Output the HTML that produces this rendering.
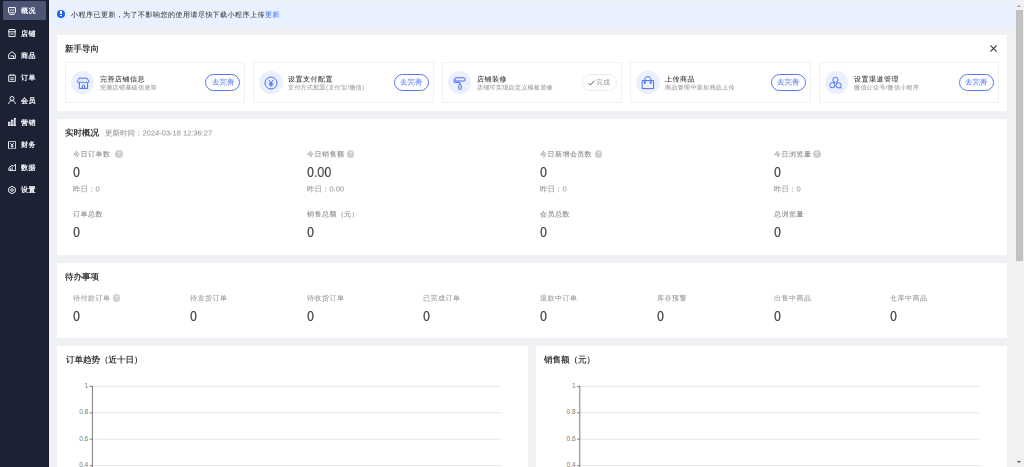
<!DOCTYPE html>
<html><head><meta charset="utf-8">
<style>
*{margin:0;padding:0;box-sizing:border-box}
html,body{width:1024px;height:467px;overflow:hidden}
body{font-family:"Liberation Sans",sans-serif;background:#f0f1f4;position:relative;color:#333}
.abs{position:absolute}
.tx{position:absolute;white-space:nowrap;transform-origin:0 0;z-index:3;will-change:transform}
.side{position:absolute;left:0;top:0;width:49px;height:467px;background:#1c2134}
.side:after{content:"";position:absolute;right:0;top:0;width:1.5px;height:467px;background:#161a29}
.act{position:absolute;left:3px;top:1.1px;width:43.3px;height:18.9px;background:#4d5577;border-radius:1px}
.sico{position:absolute;width:8px;height:8px}
.topstrip{position:absolute;left:49px;top:0;width:966px;height:1.3px;background:#f1f2f4}
.banner{position:absolute;left:49px;top:1.3px;width:966px;height:26.2px;background:#eaf1fe}
.dot{position:absolute;left:56.9px;top:9.6px;width:8.4px;height:8.4px;border-radius:50%;background:#2160f5}
.dot:before{content:"";position:absolute;left:3.6px;top:1.6px;width:1.2px;height:3.2px;background:#fff}
.dot:after{content:"";position:absolute;left:3.6px;top:5.6px;width:1.2px;height:1.2px;background:#fff}
.card{position:absolute;background:#fff}
.gi{position:absolute;width:180.44px;height:40.3px;border:1px solid #f0f1f5;background:#fff}
.circ{position:absolute;width:23.4px;height:23.4px;border-radius:50%;background:#eaf0fd}
.circ svg{position:absolute;left:4.7px;top:5.2px;width:14px;height:14px}
.btn{position:absolute;width:35px;height:16.8px;border:1px solid #5878f0;border-radius:9px}
.btn.done{border-color:#ececec}
.q{position:absolute;width:7.6px;height:7.6px;border-radius:50%;background:#cfcfcf;z-index:3}
.q svg{position:absolute;left:0;top:0}
.sb{position:absolute;left:1015px;top:0;width:9px;height:467px;background:#f1f1f1}
.sb .th{position:absolute;left:1px;top:10px;width:7px;height:250.7px;background:#c1c1c1}
.sb .up{position:absolute;left:2.3px;top:4.8px;width:0;height:0;border-left:2px solid transparent;border-right:2px solid transparent;border-bottom:2.2px solid #a3a3a3}
.sb .dn{position:absolute;left:2.3px;top:460.8px;width:0;height:0;border-left:2px solid transparent;border-right:2px solid transparent;border-top:2.2px solid #505050}
.chart{position:absolute;z-index:2}
</style></head><body>
<div class="side"><div class="act"></div></div>
<svg class="sico" style="left:8.2px;top:6.6px;z-index:3" viewBox="0 0 8 8" fill="none" stroke="#f2f3f6" stroke-width="1"><rect x="0.5" y="0.5" width="7" height="5.3" rx="0.4"/><path d="M1.5 7.6h5M1.8 3.9l1.5-1.3 1.4 1 1.7-1.5"/></svg>
<div class="tx " id="s0" style="left:21px;top:5.1px;font-size:14.00px;line-height:22.00px;transform:scale(0.50000,0.50000);letter-spacing:1.000px;color:#f4f5f8;-webkit-text-stroke:0.70px #f4f5f8;">概况</div>
<svg class="sico" style="left:8.2px;top:29.2px;z-index:3" viewBox="0 0 8 8" fill="none" stroke="#f2f3f6" stroke-width="1"><path d="M1.1 0.5h5.8l0.7 2.3H0.4z M0.9 2.8v4.7h6.2V2.8 M2.3 5h3.4"/></svg>
<div class="tx " id="s1" style="left:21px;top:27.700000000000003px;font-size:14.00px;line-height:22.00px;transform:scale(0.50000,0.50000);letter-spacing:1.000px;color:#f4f5f8;-webkit-text-stroke:0.70px #f4f5f8;">店铺</div>
<svg class="sico" style="left:8.2px;top:51.4px;z-index:3" viewBox="0 0 8 8" fill="none" stroke="#f2f3f6" stroke-width="1"><path d="M0.7 3.3L4 0.7 7.3 3.3v4.2H0.7z M2.5 4.9h3v2.6"/></svg>
<div class="tx " id="s2" style="left:21px;top:49.9px;font-size:14.00px;line-height:22.00px;transform:scale(0.50000,0.50000);letter-spacing:1.000px;color:#f4f5f8;-webkit-text-stroke:0.70px #f4f5f8;">商品</div>
<svg class="sico" style="left:8.2px;top:73.7px;z-index:3" viewBox="0 0 8 8" fill="none" stroke="#f2f3f6" stroke-width="1"><rect x="0.7" y="1.2" width="6.6" height="6.5" rx="0.4"/><path d="M2.7 0.3v1.6M5.3 0.3v1.6M2.2 3.9h3.6M2.2 5.7h3.6"/></svg>
<div class="tx " id="s3" style="left:21px;top:72.2px;font-size:14.00px;line-height:22.00px;transform:scale(0.50000,0.50000);letter-spacing:1.000px;color:#f4f5f8;-webkit-text-stroke:0.70px #f4f5f8;">订单</div>
<svg class="sico" style="left:8.2px;top:96.0px;z-index:3" viewBox="0 0 8 8" fill="none" stroke="#f2f3f6" stroke-width="1"><circle cx="4" cy="2.5" r="2"/><path d="M0.6 7.9c0.4-2.3 1.8-3.3 3.4-3.3s3 1 3.4 3.3"/></svg>
<div class="tx " id="s4" style="left:21px;top:94.5px;font-size:14.00px;line-height:22.00px;transform:scale(0.50000,0.50000);letter-spacing:1.000px;color:#f4f5f8;-webkit-text-stroke:0.70px #f4f5f8;">会员</div>
<svg class="sico" style="left:8.2px;top:118.4px;z-index:3" viewBox="0 0 8 8" fill="none" stroke="#f2f3f6" stroke-width="1"><path d="M0 7.8h8.6"/><rect x="0.4" y="4.3" width="1.5" height="2.8"/><rect x="3.4" y="2.3" width="1.5" height="4.8"/><rect x="6.4" y="0.4" width="1.5" height="6.7"/></svg>
<div class="tx " id="s5" style="left:21px;top:116.9px;font-size:14.00px;line-height:22.00px;transform:scale(0.50000,0.50000);letter-spacing:1.000px;color:#f4f5f8;-webkit-text-stroke:0.70px #f4f5f8;">营销</div>
<svg class="sico" style="left:8.2px;top:140.8px;z-index:3" viewBox="0 0 8 8" fill="none" stroke="#f2f3f6" stroke-width="1"><rect x="0.5" y="0.3" width="7.2" height="7.6" rx="0.6"/><path d="M2.4 2.2L4.1 4.2l1.7-2M4.1 4.2v2.4M2.6 5.2h3"/></svg>
<div class="tx " id="s6" style="left:21px;top:139.3px;font-size:14.00px;line-height:22.00px;transform:scale(0.50000,0.50000);letter-spacing:1.000px;color:#f4f5f8;-webkit-text-stroke:0.70px #f4f5f8;">财务</div>
<svg class="sico" style="left:8.2px;top:163.2px;z-index:3" viewBox="0 0 8 8" fill="none" stroke="#f2f3f6" stroke-width="1"><path d="M0.9 7.6h6.7V1.4L5.3 3.1 4 2.4 0.9 4.8z"/><path d="M2.4 7.4V5.4M4.1 7.4V4.2" /></svg>
<div class="tx " id="s7" style="left:21px;top:161.7px;font-size:14.00px;line-height:22.00px;transform:scale(0.50000,0.50000);letter-spacing:1.000px;color:#f4f5f8;-webkit-text-stroke:0.70px #f4f5f8;">数据</div>
<svg class="sico" style="left:8.2px;top:185.5px;z-index:3" viewBox="0 0 8 8" fill="none" stroke="#f2f3f6" stroke-width="1"><path d="M4 0.3l3.3 1.9v3.6L4 7.7 0.7 5.8V2.2z"/><circle cx="4" cy="4" r="1.3"/></svg>
<div class="tx " id="s8" style="left:21px;top:184.0px;font-size:14.00px;line-height:22.00px;transform:scale(0.50000,0.50000);letter-spacing:1.000px;color:#f4f5f8;-webkit-text-stroke:0.70px #f4f5f8;">设置</div>
<div class="topstrip"></div><div class="banner"></div><div class="dot" style="z-index:3"></div>
<div class="tx " id="bt" style="left:70.6px;top:8.8px;font-size:14.00px;line-height:22.00px;transform:scale(0.50000,0.50000);letter-spacing:0.920px;color:#383838;-webkit-text-stroke:0.10px #383838;">小程序已更新，为了不影响您的使用请尽快下载小程序上传<span style="color:#4a70f2;-webkit-text-stroke:0.1px #4a70f2">更新</span></div>
<div class="card" style="left:57px;top:35px;width:950.2px;height:76px"></div>
<div class="tx " id="g0" style="left:65px;top:42.8px;font-size:17.00px;line-height:24.00px;transform:scale(0.50000,0.50000);color:#2b2b2b;-webkit-text-stroke:0.50px #2b2b2b;">新手导向</div>
<svg class="abs" style="left:990px;top:45.2px;z-index:3" width="7" height="7" viewBox="0 0 7 7" stroke="#333" stroke-width="1.05"><path d="M0.4 0.4l6.2 6.2M6.6 0.4l-6.2 6.2"/></svg>
<div class="gi" style="left:65.00px;top:62.3px"></div>
<div class="circ" style="left:70.9px;top:70.6px;z-index:3"><svg viewBox="0 0 14 14" fill="none" stroke="#4a6cf0" stroke-width="1"><path d="M3 2.2h8l2 3.2c0 0.9-0.7 1.4-1.4 1.4s-1.3-0.5-1.5-1.1c-0.2 0.6-0.8 1.1-1.5 1.1s-1.3-0.5-1.5-1.1c-0.2 0.6-0.8 1.1-1.5 1.1s-1.3-0.5-1.5-1.1c-0.2 0.6-0.8 1.1-1.5 1.1S1.5 6.1 1.5 5.2z M3.3 6.6V12.4h8.3V6.6 M6.3 12.4V10.2c0-0.7 0.5-1.2 1.15-1.2s1.15 0.5 1.15 1.2v2.2"/></svg></div>
<div class="tx " id="gt0" style="left:100.0px;top:73.8px;font-size:14.00px;line-height:20.00px;transform:scale(0.50000,0.50000);letter-spacing:1.000px;color:#333;-webkit-text-stroke:0.12px #333;">完善店铺信息</div>
<div class="tx " id="gs0" style="left:100.0px;top:83.2px;font-size:12.00px;line-height:18.00px;transform:scale(0.50000,0.50000);letter-spacing:0.666px;color:#a0a0a0;-webkit-text-stroke:0.20px #a0a0a0;">完善店铺基础信息等</div>
<div class="btn" style="left:205.44px;top:74px;z-index:3"></div>
<div class="tx " id="gb0" style="left:211.64px;top:76.8px;font-size:15.00px;line-height:20.00px;transform:scale(0.50000,0.50000);color:#4a6cf0;">去完善</div>
<div class="gi" style="left:253.44px;top:62.3px"></div>
<div class="circ" style="left:259.3px;top:70.6px;z-index:3"><svg viewBox="0 0 14 14" fill="none" stroke="#4a6cf0" stroke-width="1"><circle cx="7" cy="7" r="6"/><path d="M4.7 3.8L7 6.8l2.3-3M7 6.8v4M4.8 7.3h4.4M4.8 9h4.4"/></svg></div>
<div class="tx " id="gt1" style="left:288.4px;top:73.8px;font-size:14.00px;line-height:20.00px;transform:scale(0.50000,0.50000);letter-spacing:1.000px;color:#333;-webkit-text-stroke:0.12px #333;">设置支付配置</div>
<div class="tx " id="gs1" style="left:288.4px;top:83.2px;font-size:12.00px;line-height:18.00px;transform:scale(0.50000,0.50000);letter-spacing:0.666px;color:#a0a0a0;-webkit-text-stroke:0.20px #a0a0a0;">支付方式配置(支付宝/微信)</div>
<div class="btn" style="left:393.88px;top:74px;z-index:3"></div>
<div class="tx " id="gb1" style="left:400.08px;top:76.8px;font-size:15.00px;line-height:20.00px;transform:scale(0.50000,0.50000);color:#4a6cf0;">去完善</div>
<div class="gi" style="left:441.88px;top:62.3px"></div>
<div class="circ" style="left:447.8px;top:70.6px;z-index:3"><svg viewBox="0 0 14 14" fill="none" stroke="#4a6cf0" stroke-width="1"><rect x="3" y="1.8" width="10" height="3.2" rx="0.8"/><path d="M3 3.4H2.2v3H8v2"/><rect x="6.8" y="8.4" width="2.4" height="5.2" rx="1"/></svg></div>
<div class="tx " id="gt2" style="left:476.9px;top:73.8px;font-size:14.00px;line-height:20.00px;transform:scale(0.50000,0.50000);letter-spacing:1.000px;color:#333;-webkit-text-stroke:0.12px #333;">店铺装修</div>
<div class="tx " id="gs2" style="left:476.9px;top:83.2px;font-size:12.00px;line-height:18.00px;transform:scale(0.50000,0.50000);letter-spacing:0.666px;color:#a0a0a0;-webkit-text-stroke:0.20px #a0a0a0;">店铺可实现自定义模板装修</div>
<div class="btn done" style="left:582.32px;top:74px;z-index:3"></div>
<svg class="abs" style="left:588.32px;top:79.6px;z-index:3" width="7" height="6" viewBox="0 0 7 6" fill="none" stroke="#4d5563" stroke-width="1"><path d="M0.6 3.2l1.8 1.9L6.4 0.8"/></svg>
<div class="tx " id="gb2" style="left:596.32px;top:76.8px;font-size:14.00px;line-height:20.00px;transform:scale(0.50000,0.50000);letter-spacing:0.200px;color:#9a9a9a;">完成</div>
<div class="gi" style="left:630.32px;top:62.3px"></div>
<div class="circ" style="left:636.2px;top:70.6px;z-index:3"><svg viewBox="0 0 14 14" fill="none" stroke="#4a6cf0" stroke-width="1"><path d="M1.2 4.6h11.4v8H1.2z M3.9 6.4V3.2C3.9 1.7 5.3 0.7 6.9 0.7s3 1 3 2.5v3.2"/><circle cx="3.9" cy="6.7" r="0.7" fill="#4a6cf0"/><circle cx="9.9" cy="6.7" r="0.7" fill="#4a6cf0"/></svg></div>
<div class="tx " id="gt3" style="left:665.3px;top:73.8px;font-size:14.00px;line-height:20.00px;transform:scale(0.50000,0.50000);letter-spacing:1.000px;color:#333;-webkit-text-stroke:0.12px #333;">上传商品</div>
<div class="tx " id="gs3" style="left:665.3px;top:83.2px;font-size:12.00px;line-height:18.00px;transform:scale(0.50000,0.50000);letter-spacing:0.666px;color:#a0a0a0;-webkit-text-stroke:0.20px #a0a0a0;">商品管理中添加商品上传</div>
<div class="btn" style="left:770.76px;top:74px;z-index:3"></div>
<div class="tx " id="gb3" style="left:776.96px;top:76.8px;font-size:15.00px;line-height:20.00px;transform:scale(0.50000,0.50000);color:#4a6cf0;">去完善</div>
<div class="gi" style="left:818.76px;top:62.3px"></div>
<div class="circ" style="left:824.7px;top:70.6px;z-index:3"><svg viewBox="0 0 14 14" fill="none" stroke="#4a6cf0" stroke-width="1"><circle cx="6.4" cy="3.9" r="2.6"/><circle cx="3.4" cy="9.2" r="2.6"/><circle cx="9.6" cy="9.4" r="2.6"/><path d="M11.4 11.2l1.4 1.4"/></svg></div>
<div class="tx " id="gt4" style="left:853.8px;top:73.8px;font-size:14.00px;line-height:20.00px;transform:scale(0.50000,0.50000);letter-spacing:1.000px;color:#333;-webkit-text-stroke:0.12px #333;">设置渠道管理</div>
<div class="tx " id="gs4" style="left:853.8px;top:83.2px;font-size:12.00px;line-height:18.00px;transform:scale(0.50000,0.50000);letter-spacing:0.666px;color:#a0a0a0;-webkit-text-stroke:0.20px #a0a0a0;">微信公众号/微信小程序</div>
<div class="btn" style="left:959.2px;top:74px;z-index:3"></div>
<div class="tx " id="gb4" style="left:965.4000000000001px;top:76.8px;font-size:15.00px;line-height:20.00px;transform:scale(0.50000,0.50000);color:#4a6cf0;">去完善</div>
<div class="card" style="left:57px;top:118.5px;width:950.2px;height:136.9px"></div>
<div class="tx " id="r0" style="left:65px;top:127px;font-size:17.00px;line-height:24.00px;transform:scale(0.50000,0.50000);color:#2b2b2b;-webkit-text-stroke:0.50px #2b2b2b;">实时概况</div>
<div class="tx " id="rt" style="left:104.5px;top:128px;font-size:15.00px;line-height:20.00px;transform:scale(0.50000,0.50000);color:#9a9a9a;-webkit-text-stroke:0.20px #9a9a9a;">更新时间：2024-03-18 12:36:27</div>
<div class="tx " id="rl0" style="left:73px;top:149.4px;font-size:14.00px;line-height:20.00px;transform:scale(0.50000,0.50000);letter-spacing:0.900px;color:#8c8c8c;-webkit-text-stroke:0.20px #8c8c8c;">今日订单数</div>
<div class="q" id="rq0" style="left:115.3px;top:150.4px"><svg width="7.6" height="7.6" viewBox="0 0 8 8"><path d="M2.9 3.1c0-0.7 0.5-1.2 1.1-1.2s1.1 0.4 1.1 1c0 0.8-1.1 0.9-1.1 1.7" fill="none" stroke="#fff" stroke-width="0.8"/><circle cx="4" cy="5.9" r="0.5" fill="#fff"/></svg></div>
<div class="tx " id="rn0" style="left:73px;top:163.5px;font-size:14.50px;line-height:16.00px;transform:scale(0.86000,1.00000);color:#363636;-webkit-text-stroke:0.10px #363636;">0</div>
<div class="tx " id="ry0" style="left:73px;top:184px;font-size:15.00px;line-height:20.00px;transform:scale(0.50000,0.50000);color:#9a9a9a;-webkit-text-stroke:0.20px #9a9a9a;">昨日：0</div>
<div class="tx " id="rb0" style="left:73px;top:209.4px;font-size:14.00px;line-height:20.00px;transform:scale(0.50000,0.50000);letter-spacing:0.900px;color:#8c8c8c;-webkit-text-stroke:0.20px #8c8c8c;">订单总数</div>
<div class="tx " id="rm0" style="left:73px;top:224px;font-size:14.50px;line-height:16.00px;transform:scale(0.86000,1.00000);color:#363636;-webkit-text-stroke:0.10px #363636;">0</div>
<div class="tx " id="rl1" style="left:306.5px;top:149.4px;font-size:14.00px;line-height:20.00px;transform:scale(0.50000,0.50000);letter-spacing:0.900px;color:#8c8c8c;-webkit-text-stroke:0.20px #8c8c8c;">今日销售额</div>
<div class="q" id="rq1" style="left:346.9px;top:150.4px"><svg width="7.6" height="7.6" viewBox="0 0 8 8"><path d="M2.9 3.1c0-0.7 0.5-1.2 1.1-1.2s1.1 0.4 1.1 1c0 0.8-1.1 0.9-1.1 1.7" fill="none" stroke="#fff" stroke-width="0.8"/><circle cx="4" cy="5.9" r="0.5" fill="#fff"/></svg></div>
<div class="tx " id="rn1" style="left:306.5px;top:163.5px;font-size:14.50px;line-height:16.00px;transform:scale(0.86000,1.00000);color:#363636;-webkit-text-stroke:0.10px #363636;">0.00</div>
<div class="tx " id="ry1" style="left:306.5px;top:184px;font-size:15.00px;line-height:20.00px;transform:scale(0.50000,0.50000);color:#9a9a9a;-webkit-text-stroke:0.20px #9a9a9a;">昨日：0.00</div>
<div class="tx " id="rb1" style="left:306.5px;top:209.4px;font-size:14.00px;line-height:20.00px;transform:scale(0.50000,0.50000);letter-spacing:0.900px;color:#8c8c8c;-webkit-text-stroke:0.20px #8c8c8c;">销售总额（元）</div>
<div class="tx " id="rm1" style="left:306.5px;top:224px;font-size:14.50px;line-height:16.00px;transform:scale(0.86000,1.00000);color:#363636;-webkit-text-stroke:0.10px #363636;">0</div>
<div class="tx " id="rl2" style="left:540px;top:149.4px;font-size:14.00px;line-height:20.00px;transform:scale(0.50000,0.50000);letter-spacing:0.900px;color:#8c8c8c;-webkit-text-stroke:0.20px #8c8c8c;">今日新增会员数</div>
<div class="q" id="rq2" style="left:594.6px;top:150.4px"><svg width="7.6" height="7.6" viewBox="0 0 8 8"><path d="M2.9 3.1c0-0.7 0.5-1.2 1.1-1.2s1.1 0.4 1.1 1c0 0.8-1.1 0.9-1.1 1.7" fill="none" stroke="#fff" stroke-width="0.8"/><circle cx="4" cy="5.9" r="0.5" fill="#fff"/></svg></div>
<div class="tx " id="rn2" style="left:540px;top:163.5px;font-size:14.50px;line-height:16.00px;transform:scale(0.86000,1.00000);color:#363636;-webkit-text-stroke:0.10px #363636;">0</div>
<div class="tx " id="ry2" style="left:540px;top:184px;font-size:15.00px;line-height:20.00px;transform:scale(0.50000,0.50000);color:#9a9a9a;-webkit-text-stroke:0.20px #9a9a9a;">昨日：0</div>
<div class="tx " id="rb2" style="left:540px;top:209.4px;font-size:14.00px;line-height:20.00px;transform:scale(0.50000,0.50000);letter-spacing:0.900px;color:#8c8c8c;-webkit-text-stroke:0.20px #8c8c8c;">会员总数</div>
<div class="tx " id="rm2" style="left:540px;top:224px;font-size:14.50px;line-height:16.00px;transform:scale(0.86000,1.00000);color:#363636;-webkit-text-stroke:0.10px #363636;">0</div>
<div class="tx " id="rl3" style="left:773.5px;top:149.4px;font-size:14.00px;line-height:20.00px;transform:scale(0.50000,0.50000);letter-spacing:0.900px;color:#8c8c8c;-webkit-text-stroke:0.20px #8c8c8c;">今日浏览量</div>
<div class="q" id="rq3" style="left:813.4px;top:150.4px"><svg width="7.6" height="7.6" viewBox="0 0 8 8"><path d="M2.9 3.1c0-0.7 0.5-1.2 1.1-1.2s1.1 0.4 1.1 1c0 0.8-1.1 0.9-1.1 1.7" fill="none" stroke="#fff" stroke-width="0.8"/><circle cx="4" cy="5.9" r="0.5" fill="#fff"/></svg></div>
<div class="tx " id="rn3" style="left:773.5px;top:163.5px;font-size:14.50px;line-height:16.00px;transform:scale(0.86000,1.00000);color:#363636;-webkit-text-stroke:0.10px #363636;">0</div>
<div class="tx " id="ry3" style="left:773.5px;top:184px;font-size:15.00px;line-height:20.00px;transform:scale(0.50000,0.50000);color:#9a9a9a;-webkit-text-stroke:0.20px #9a9a9a;">昨日：0</div>
<div class="tx " id="rb3" style="left:773.5px;top:209.4px;font-size:14.00px;line-height:20.00px;transform:scale(0.50000,0.50000);letter-spacing:0.900px;color:#8c8c8c;-webkit-text-stroke:0.20px #8c8c8c;">总浏览量</div>
<div class="tx " id="rm3" style="left:773.5px;top:224px;font-size:14.50px;line-height:16.00px;transform:scale(0.86000,1.00000);color:#363636;-webkit-text-stroke:0.10px #363636;">0</div>
<div class="card" style="left:57px;top:263px;width:950.2px;height:74.7px"></div>
<div class="tx " id="d0" style="left:65px;top:271px;font-size:17.00px;line-height:24.00px;transform:scale(0.50000,0.50000);color:#2b2b2b;-webkit-text-stroke:0.50px #2b2b2b;">待办事项</div>
<div class="tx " id="dl0" style="left:73.0px;top:293.2px;font-size:14.00px;line-height:20.00px;transform:scale(0.50000,0.50000);letter-spacing:0.920px;color:#9d9d9d;-webkit-text-stroke:0.20px #9d9d9d;">待付款订单</div>
<div class="q" id="dq0" style="left:112.8px;top:294.3px"><svg width="7.6" height="7.6" viewBox="0 0 8 8"><path d="M2.9 3.1c0-0.7 0.5-1.2 1.1-1.2s1.1 0.4 1.1 1c0 0.8-1.1 0.9-1.1 1.7" fill="none" stroke="#fff" stroke-width="0.8"/><circle cx="4" cy="5.9" r="0.5" fill="#fff"/></svg></div>
<div class="tx " id="dn0" style="left:73.0px;top:307.5px;font-size:14.50px;line-height:16.00px;transform:scale(0.86000,1.00000);color:#363636;-webkit-text-stroke:0.10px #363636;">0</div>
<div class="tx " id="dl1" style="left:190.0px;top:293.2px;font-size:14.00px;line-height:20.00px;transform:scale(0.50000,0.50000);letter-spacing:0.920px;color:#9d9d9d;-webkit-text-stroke:0.20px #9d9d9d;">待发货订单</div>
<div class="tx " id="dn1" style="left:190.0px;top:307.5px;font-size:14.50px;line-height:16.00px;transform:scale(0.86000,1.00000);color:#363636;-webkit-text-stroke:0.10px #363636;">0</div>
<div class="tx " id="dl2" style="left:306.5px;top:293.2px;font-size:14.00px;line-height:20.00px;transform:scale(0.50000,0.50000);letter-spacing:0.920px;color:#9d9d9d;-webkit-text-stroke:0.20px #9d9d9d;">待收货订单</div>
<div class="tx " id="dn2" style="left:306.5px;top:307.5px;font-size:14.50px;line-height:16.00px;transform:scale(0.86000,1.00000);color:#363636;-webkit-text-stroke:0.10px #363636;">0</div>
<div class="tx " id="dl3" style="left:423.0px;top:293.2px;font-size:14.00px;line-height:20.00px;transform:scale(0.50000,0.50000);letter-spacing:0.920px;color:#9d9d9d;-webkit-text-stroke:0.20px #9d9d9d;">已完成订单</div>
<div class="tx " id="dn3" style="left:423.0px;top:307.5px;font-size:14.50px;line-height:16.00px;transform:scale(0.86000,1.00000);color:#363636;-webkit-text-stroke:0.10px #363636;">0</div>
<div class="tx " id="dl4" style="left:540.0px;top:293.2px;font-size:14.00px;line-height:20.00px;transform:scale(0.50000,0.50000);letter-spacing:0.920px;color:#9d9d9d;-webkit-text-stroke:0.20px #9d9d9d;">退款中订单</div>
<div class="tx " id="dn4" style="left:540.0px;top:307.5px;font-size:14.50px;line-height:16.00px;transform:scale(0.86000,1.00000);color:#363636;-webkit-text-stroke:0.10px #363636;">0</div>
<div class="tx " id="dl5" style="left:657.0px;top:293.2px;font-size:14.00px;line-height:20.00px;transform:scale(0.50000,0.50000);letter-spacing:0.920px;color:#9d9d9d;-webkit-text-stroke:0.20px #9d9d9d;">库存预警</div>
<div class="tx " id="dn5" style="left:657.0px;top:307.5px;font-size:14.50px;line-height:16.00px;transform:scale(0.86000,1.00000);color:#363636;-webkit-text-stroke:0.10px #363636;">0</div>
<div class="tx " id="dl6" style="left:773.5px;top:293.2px;font-size:14.00px;line-height:20.00px;transform:scale(0.50000,0.50000);letter-spacing:0.920px;color:#9d9d9d;-webkit-text-stroke:0.20px #9d9d9d;">出售中商品</div>
<div class="tx " id="dn6" style="left:773.5px;top:307.5px;font-size:14.50px;line-height:16.00px;transform:scale(0.86000,1.00000);color:#363636;-webkit-text-stroke:0.10px #363636;">0</div>
<div class="tx " id="dl7" style="left:890.0px;top:293.2px;font-size:14.00px;line-height:20.00px;transform:scale(0.50000,0.50000);letter-spacing:0.920px;color:#9d9d9d;-webkit-text-stroke:0.20px #9d9d9d;">仓库中商品</div>
<div class="tx " id="dn7" style="left:890.0px;top:307.5px;font-size:14.50px;line-height:16.00px;transform:scale(0.86000,1.00000);color:#363636;-webkit-text-stroke:0.10px #363636;">0</div>
<div class="card" style="left:57px;top:345.9px;width:470.5px;height:121.1px"></div><div class="tx " id="c0" style="left:65.5px;top:354.4px;font-size:17.00px;line-height:24.00px;transform:scale(0.50000,0.50000);color:#2b2b2b;-webkit-text-stroke:0.50px #2b2b2b;">订单趋势（近十日）</div><svg class="chart" style="left:57px;top:345.9px" width="470.5" height="122"><g stroke="#e8e8e8" stroke-width="1"><path d="M35.4 40.4H444.6"/><path d="M35.4 66.8H444.6"/><path d="M35.4 93.2H444.6"/><path d="M35.4 119.6H444.6"/></g><g stroke="#6e6e6e" stroke-width="0.9"><path d="M35.4 40V122"/><path d="M32.7 40.4h2.7"/><path d="M32.7 66.8h2.7"/><path d="M32.7 93.2h2.7"/><path d="M32.7 119.6h2.7"/></g><g font-family="Liberation Sans" font-size="6.5" fill="#777" text-anchor="end"><text x="31.2" y="41.8">1</text><text x="31.2" y="68.2">0.8</text><text x="31.2" y="94.6">0.6</text><text x="31.2" y="121.0">0.4</text></g></svg>
<div class="card" style="left:535.8px;top:345.9px;width:471px;height:121.1px"></div><div class="tx " id="c1" style="left:544.3px;top:354.4px;font-size:17.00px;line-height:24.00px;transform:scale(0.50000,0.50000);color:#2b2b2b;-webkit-text-stroke:0.50px #2b2b2b;">销售额（元）</div><svg class="chart" style="left:535.8px;top:345.9px" width="471" height="122"><g stroke="#e8e8e8" stroke-width="1"><path d="M43.8 40.4H444.2"/><path d="M43.8 66.8H444.2"/><path d="M43.8 93.2H444.2"/><path d="M43.8 119.6H444.2"/></g><g stroke="#6e6e6e" stroke-width="0.9"><path d="M43.8 40V122"/><path d="M41.1 40.4h2.7"/><path d="M41.1 66.8h2.7"/><path d="M41.1 93.2h2.7"/><path d="M41.1 119.6h2.7"/></g><g font-family="Liberation Sans" font-size="6.5" fill="#777" text-anchor="end"><text x="39.6" y="41.8">1</text><text x="39.6" y="68.2">0.8</text><text x="39.6" y="94.6">0.6</text><text x="39.6" y="121.0">0.4</text></g></svg>
<div class="sb"><div class="up"></div><div class="th"></div><div class="dn"></div></div>
</body></html>
